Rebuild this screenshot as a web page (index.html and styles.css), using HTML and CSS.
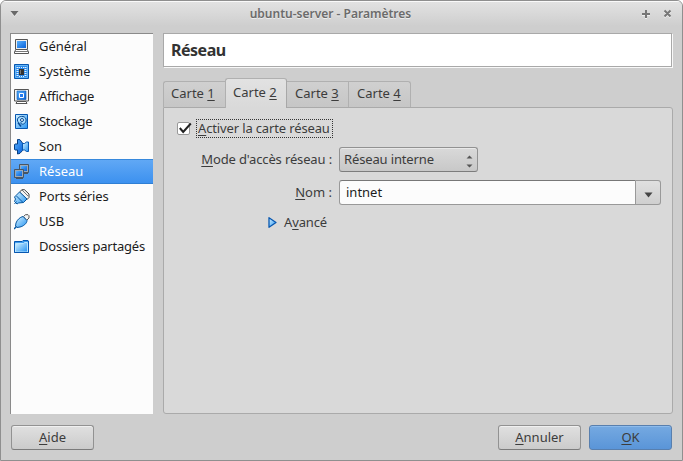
FILE: index.html
```html
<!DOCTYPE html>
<html lang="fr">
<head>
<meta charset="utf-8">
<title>ubuntu-server - Paramètres</title>
<link rel="stylesheet" href="styles.css">
</head>
<body>
<svg width="0" height="0" class="defs" aria-hidden="true">
  <defs>
    <linearGradient id="blue" x1="0" y1="0" x2="1" y2="1"><stop offset="0" stop-color="#59b2ff"/><stop offset="1" stop-color="#0860d8"/></linearGradient>
    <linearGradient id="sky" x1="0" y1="0" x2="1" y2="1"><stop offset="0" stop-color="#d8f4ff"/><stop offset="1" stop-color="#2492f2"/></linearGradient>
  </defs>
</svg>
<div class="window">
  <header class="titlebar">
    <svg class="menu-arrow" width="9" height="6" viewBox="0 0 9 6"><path d="M0.5 1h8L4.500 5.800z" fill="#fff" opacity=".6"/><path d="M0.500 0h8L4.500 5z" fill="#696969"/></svg>
    <span class="title">ubuntu-server - Paramètres</span>
    <svg class="controls" width="32" height="10" viewBox="0 0 32 10"><g fill="none" stroke-width="2"><path d="M4 2v8M0 6h8M22.500 2.500l6 6M28.500 2.500l-6 6" stroke="#f0f0f0"/><path d="M4 1v8M0 5h8M22.500 1.500l6 6M28.500 1.500l-6 6" stroke="#777"/></g></svg>
  </header>
  <main class="content">
    <nav class="sidebar">
      <div class="item"><svg width="16" height="16" viewBox="0 0 16 16"><path d="M1.500.500h12v10h-12z" fill="#eee" stroke="#555"/><path d="M3 2h9v7H3z" fill="url(#blue)"/><path d="M2 10.500h11l1.500 2v2H.5v-2z" fill="#fff" stroke="#555"/><path d="M1 12.500h13" stroke="#777"/></svg><span>Général</span></div>
      <div class="item"><svg width="16" height="16" viewBox="0 0 16 16"><path d="M.5.500h14v14H.5z" fill="#2a88ea" stroke="#0757b0"/><path d="M1.500 1.500h12v12h-12z" fill="none" stroke="#65b5f5"/><path d="M5 5h5v6H5z" fill="#333"/><path d="M6 6h1v4H6z" fill="#777"/><path d="M3.500 3v10M11.500 3v10" stroke="#e5f5ff" stroke-width="2" stroke-dasharray="1 1"/><path d="M5 3.500h6M5 12.500h6" stroke="#e5f5ff" stroke-dasharray="1 1"/></svg><span>Système</span></div>
      <div class="item"><svg width="16" height="16" viewBox="0 0 16 16"><path d="M.5.500h14v11.500h-14z" fill="#f4f4f4" stroke="#555"/><path d="M3 2h9v8.500H3z" fill="url(#blue)" stroke="#0757b0" stroke-width=".6"/><path d="M5.500 4.500h4v4h-4z" fill="#247cf0" stroke="#fff"/><path d="M3 12.500h9l1 2H2z" fill="#fff" stroke="#555"/></svg><span class="snug">Affichage</span></div>
      <div class="item"><svg width="16" height="16" viewBox="0 0 16 16"><path d="M1.500.500h12v14h-12z" fill="url(#sky)" stroke="#0757b0"/><path d="M4.500 8.500C1.500 5 5 1.800 9 2.500c4 .8 4 6 .5 7.500-2 .7-3-.5-2.500-1.800" fill="#aee0ff" stroke="#074a94"/><circle cx="8" cy="6" r="1.500" fill="#fff" stroke="#074a94"/><path d="M4 8.500l3 4" stroke="#074a94" stroke-width="1.500"/></svg><span class="snug">Stockage</span></div>
      <div class="item"><svg width="16" height="16" viewBox="0 0 16 16"><path d="M8.500 4L6 .7 3.500.5v4.500H1l-.5.500v5l.5.500h2.500v4L6 14.300 8.500 11.500z" fill="url(#blue)" stroke="#073f83"/><path d="M8.500 4.500h2l2-1.500h2v9.500h-2l-2-1.500h-2z" fill="url(#sky)" stroke="#0757b0"/></svg><span>Son</span></div>
      <div class="item selected"><svg width="16" height="16" viewBox="0 0 16 16"><path d="M5.500.500h9v8h-9z" fill="#9aa9b8" stroke="#485563"/><path d="M7 2h6v5H7z" fill="url(#blue)"/><path d="M7 9.500h7" stroke="#485563"/><path d="M.5 5.500h9v8h-9z" fill="#9aa9b8" stroke="#485563"/><path d="M2 7h6v5H2z" fill="url(#blue)"/><path d="M2 14.500h7" stroke="#485563"/></svg><span>Réseau</span></div>
      <div class="item"><svg width="16" height="16" viewBox="0 0 16 16"><path d="M5.500 3L8 .7h2.500L15 5v3.500l-2 2z" fill="#f4f4f4" stroke="#444"/><path d="M8 1l6 6" stroke="#777" fill="none"/><path d="M5.500 3l7.500 7-3.500 3.500-5 .5-1.500 1L.5 12.500l1-2.500-1-2z" fill="url(#sky)" stroke="#0757a0" stroke-linejoin="round"/><path d="M2.500 7l6.500 6.500M2.500 12.500L.5 15" stroke="#0757a0"/></svg><span class="mid">Ports séries</span></div>
      <div class="item"><svg width="16" height="16" viewBox="0 0 16 16"><path d="M9.500 2.500l2-1.800h2.500l1 1V4l-2.500 2.500z" fill="#f4f4f4" stroke="#555"/><path d="M9 2.500l4 4c0 3-4 6-7 6.500l-3 .5-1.500-1.500.5-3C3 6 6 3 9 2.500z" fill="url(#sky)" stroke="#0757a0"/><path d="M2.500 12.500l-2.500 2.500" stroke="#0757a0" stroke-width="1.500"/></svg><span>USB</span></div>
      <div class="item"><svg width="16" height="16" viewBox="0 0 16 16"><path d="M.5 13.500V2.500H8l1-1h5l.5.500v11.500z" fill="#3f9dee" stroke="#0757b0"/><path d="M1.500 13V4.500h8l1-1h3V13z" fill="url(#sky)" stroke="#b8e4ff"/><path d="M.5 13.500h14" stroke="#0757b0"/></svg><span class="folder">Dossiers partagés</span></div>
    </nav>
    <section class="pane">
      <h1 class="heading"><span>Réseau</span></h1>
      <div class="tabs">
        <div class="tab"><span>Carte <u>1</u></span></div>
        <div class="tab active"><span>Carte <u>2</u></span></div>
        <div class="tab after"><span>Carte <u>3</u></span></div>
        <div class="tab"><span>Carte <u>4</u></span></div>
      </div>
      <div class="panel">
        <div class="enable">
          <svg width="16" height="14" viewBox="0 0 16 14"><rect x=".5" y=".5" width="12" height="12" rx="1.500" fill="#fff" stroke="#999"/><path d="M2.800 6l3.400 4L13.800 1.500" fill="none" stroke="#222" stroke-width="2"/></svg>
          <span class="focus"><span class="mid"><u>A</u>ctiver la carte réseau</span></span>
        </div>
        <div class="row mode">
          <label><span class="mid"><u>M</u>ode d'accès réseau :</span></label>
          <div class="select"><span class="mid">Réseau interne</span><svg width="7" height="13" viewBox="0 0 7 13"><path d="M.5 3.500h6L3.500.500zM.5 9.500h6L3.500 12.500z" fill="#555"/></svg></div>
        </div>
        <div class="row name">
          <label><span><u>N</u>om :</span></label>
          <div class="combo"><div class="field"><span>intnet</span></div><div class="drop"><svg width="9" height="6" viewBox="0 0 9 6"><path d="M.5.500h8L4.500 5.500z" fill="#444"/></svg></div></div>
        </div>
        <div class="advanced"><svg width="9" height="11" viewBox="0 0 9 11"><path d="M1 .7v9.600L8 5.500z" fill="url(#sky)" stroke="#0757b0" stroke-width="1.300" stroke-linejoin="round"/></svg><span class="mid">A<u>v</u>ancé</span></div>
      </div>
    </section>
  </main>
  <footer class="footer">
    <div class="button"><span><u>A</u>ide</span></div>
    <div class="button cancel"><span><u>A</u>nnuler</span></div>
    <div class="button ok"><span><u>O</u>K</span></div>
  </footer>
</div>
</body>
</html>
```
FILE: styles.css
```css
* { box-sizing: border-box; }
body { margin: 0; background: #fff; color: #3c3c3c; font: 13px/18px "Noto Sans", "Open Sans", sans-serif; }
.defs { display: block; height: 0; }
svg { flex: none; display: block; }
span { white-space: nowrap; }
u { text-decoration: underline 1px; text-underline-offset: 2px; text-decoration-skip-ink: none; }
.mid { letter-spacing: -0.14px; }
.snug { letter-spacing: -0.28px; }
.folder { letter-spacing: -0.22px; }
.window { width: 683px; height: 461px; border: 1px solid #8f8f8f; border-radius: 6px 6px 0 0; background: #cecece; display: flex; flex-direction: column; overflow: hidden; }
.titlebar { height: 32px; flex: none; display: flex; align-items: center; justify-content: space-between; padding: 0 8px 7px 9px; border-top: 1px solid #fafafa; background: linear-gradient(#e2e2e2, #cecece 24px); }
.title { font-size: 12px; font-weight: 600; color: #6b6b6b; text-shadow: 0 1px #eee; }
.content { height: 381px; flex: none; display: grid; grid-template-columns: 143px 510px; column-gap: 10px; padding-left: 9px; }
.sidebar { background: #fcfcfc; border-top: 1px solid #8a8a8a; border-left: 1px solid #8a8a8a; color: #1c1c1c; }
.item { height: 25px; display: flex; align-items: center; gap: 9px; padding: 0 0 1px 3px; }
.item svg { margin-top: 1px; }
.selected { color: #fff; background: linear-gradient(#62a9f5, #3b90ef); box-shadow: inset 0 1px #3688dc, inset 0 -1px #2f7fd4; }
.pane { display: flex; flex-direction: column; }
.heading { margin: 0 1px 0 0; height: 34px; background: #fff; border: 1px solid #a9a9a9; box-shadow: 1px 1px #f8f8f8; padding-left: 7px; font: bold 16px/32px "Noto Sans", sans-serif; letter-spacing: -0.5px; color: #333; }
.tabs { height: 30px; margin-top: 11px; display: flex; align-items: flex-end; }
.tab { width: 62px; height: 26px; margin-bottom: 1px; border: 1px solid #b0b0b0; border-bottom: 0; border-right: 0; background: linear-gradient(#d0d0d0, #c6c6c6); padding: 2px 0 0 7px; }
.tab:first-child { border-radius: 3px 0 0 0; }
.tab:last-child { border-radius: 0 3px 0 0; border-right: 1px solid #b0b0b0; width: 63px; padding-left: 8px; }
.tab.after { width: 61px; border-left: 0; padding-left: 8px; }
.tab.active { height: 30px; margin-bottom: 0; border-radius: 3px 3px 0 0; background: linear-gradient(#e2e2e2, #d9d9d9); border-right: 1px solid #a8a8a8; padding-top: 4px; position: relative; }
.panel { height: 307px; margin-top: -1px; background: #d9d9d9; border: 1px solid #aaa; border-radius: 0 3px 3px 3px; padding: 10px 11px 0 13px; }
.enable { height: 21px; display: flex; align-items: center; gap: 3px; }
.focus { height: 19px; border: 1px dotted #333; padding: 0 2px 0 1px; line-height: 17px; }
.row { display: flex; align-items: center; height: 25px; }
.row label { width: 155px; text-align: right; margin-right: 7px; padding-bottom: 1px; }
.mode { margin-top: 8px; }
.name { margin-top: 8px; }
.select { width: 139px; height: 25px; display: flex; align-items: center; justify-content: space-between; border: 1px solid #929292; border-bottom-color: #7d7d7d; border-radius: 3px; padding: 0 4px; background: linear-gradient(#d9d9d9, #c8c8c8); box-shadow: inset 0 1px #e9e9e9; }
.select span { margin-bottom: 1px; }
.select svg { margin-top: 4px; }
.combo { display: flex; width: 322px; height: 25px; }
.field { flex: 1; background: #fcfcfc; border: 1px solid #999; border-top-color: #777; border-radius: 3px 0 0 3px; padding: 2px 6px; color: #1c1c1c; }
.drop { width: 25px; border: 1px solid #999; border-left: 0; border-radius: 0 3px 3px 0; background: linear-gradient(#e0e0e0, #cfcfcf); display: flex; align-items: center; justify-content: center; padding: 4px 0 0 1px; }
.advanced { display: flex; align-items: center; gap: 7px; padding-left: 91px; margin-top: 8px; height: 18px; }
.footer { display: flex; padding: 11px 10px 0; }
.button { width: 83px; height: 25px; border: 1px solid #929292; border-bottom-color: #7b7b7b; border-radius: 3px; background: linear-gradient(#e0e0e0, #cbcbcb); box-shadow: inset 0 1px #f0f0f0; text-align: center; padding-top: 2px; }
.cancel { margin-left: auto; margin-right: 8px; }
.ok { border-color: #587fae; background: linear-gradient(#75a9e1, #5a95d8); box-shadow: inset 0 1px #8dbbec; }
```
